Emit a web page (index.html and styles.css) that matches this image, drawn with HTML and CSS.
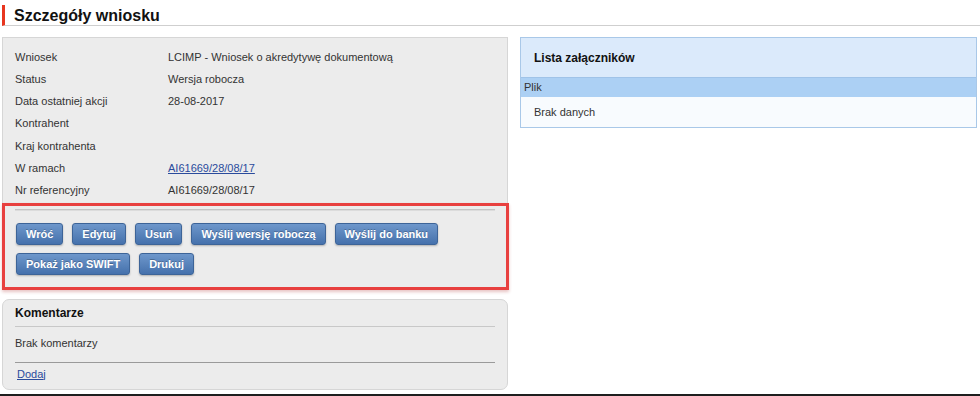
FILE: index.html
```html
<!DOCTYPE html>
<html lang="pl">
<head>
  <meta charset="UTF-8" />
  <title>Szczegóły wniosku</title>
  <link rel="stylesheet" href="styles.css">
</head>
<body>
  <div class="page">
    <h1 class="page-title">Szczegóły wniosku</h1>

    <div class="content">
      <div class="left-col">
        <!-- Details -->
        <div class="details-panel">
          <table class="details">
            <tr><td class="label">Wniosek</td><td>LCIMP - Wniosek o akredytywę dokumentową</td></tr>
            <tr><td class="label">Status</td><td>Wersja robocza</td></tr>
            <tr><td class="label">Data ostatniej akcji</td><td>28-08-2017</td></tr>
            <tr><td class="label">Kontrahent</td><td></td></tr>
            <tr><td class="label">Kraj kontrahenta</td><td></td></tr>
            <tr><td class="label">W ramach</td><td><a href="#">AI61669/28/08/17</a></td></tr>
            <tr><td class="label">Nr referencyjny</td><td>AI61669/28/08/17</td></tr>
          </table>

          <div class="actions">
            <button class="btn">Wróć</button>
            <button class="btn">Edytuj</button>
            <button class="btn">Usuń</button>
            <button class="btn">Wyślij wersję roboczą</button>
            <button class="btn">Wyślij do banku</button>
            <button class="btn">Pokaż jako SWIFT</button>
            <button class="btn">Drukuj</button>
            <div class="highlight"></div>
          </div>
        </div>

        <!-- Comments -->
        <div class="comments">
          <div class="comments-head">Komentarze</div>
          <div class="comments-body">Brak komentarzy</div>
          <div class="comments-foot"><a href="#">Dodaj</a></div>
        </div>
      </div>

      <!-- Attachments -->
      <div class="attachments">
        <div class="att-head">Lista załączników</div>
        <div class="att-cols">Plik</div>
        <div class="att-empty">Brak danych</div>
      </div>
    </div>

    <div class="bottom-line"></div>
  </div>
</body>
</html>
```

FILE: styles.css
```css
html, body {
  margin: 0;
  padding: 0;
  background: #fff;
  overflow: hidden;
}

body {
  font-family: 'Liberation Sans', Arial, sans-serif;
  font-size: 11px;
  color: #333;
}

.page {
  height: 396px;
  display: flex;
  flex-direction: column;
}

.page-title {
  margin: 5px 0 0 2px;
  height: 20px;
  line-height: 21px;
  padding-left: 9px;
  border-left: 3px solid #e8361f;
  border-bottom: 1px solid #cfcfcf;
  font-size: 16px;
  font-weight: bold;
  color: #111;
}

.content {
  display: flex;
  gap: 12px;
  margin: 11px 0 0 2px;
  align-items: flex-start;
}

.left-col {
  width: 506px;
  display: flex;
  flex-direction: column;
  gap: 10px;
}

/* Details panel */
.details-panel {
  background: #ececec;
  border: 1px solid #d6d6d6;
  padding: 8px 12px 13px;
}

.details {
  border-collapse: collapse;
}

.details td {
  height: 22px;
  padding: 0;
  vertical-align: middle;
}

.details tr:nth-child(n+4) td {
  height: 22.4px;
}

.details .label {
  width: 153px;
}

a {
  color: #2a4b9c;
}

.actions {
  position: relative;
  display: flex;
  flex-wrap: wrap;
  gap: 8px 9px;
  margin-top: 7px;
  padding: 13px 0 0 1px;
  border-top: 1px solid #c4c4c4;
  box-shadow: inset 0 1px 0 #dcdcdc;
}

.btn {
  height: 22px;
  padding: 0 9px;
  font-family: 'Liberation Sans', Arial, sans-serif;
  font-size: 11px;
  font-weight: bold;
  color: #fff;
  text-shadow: 0 -1px 0 rgba(0,0,0,0.25);
  background: linear-gradient(#6e97cb, #4571ac);
  border: 1px solid #3d6498;
  border-radius: 3px;
  box-shadow: 0 1px 2px rgba(0,0,0,0.25);
  cursor: pointer;
}

.highlight {
  position: absolute;
  left: -13px;
  right: -14px;
  top: -7px;
  bottom: -15px;
  border: 3px solid #e8403f;
  box-shadow: 0 2px 3px rgba(180,60,60,0.3);
  pointer-events: none;
}

/* Comments */
.comments {
  background: #ececec;
  border: 1px solid #d6d6d6;
  border-radius: 7px;
  padding: 0 12px;
}

.comments-head {
  height: 26px;
  line-height: 26px;
  font-size: 12px;
  font-weight: bold;
  color: #111;
  border-bottom: 1px solid #c8c8c8;
}

.comments-body {
  height: 35px;
  line-height: 33px;
  border-bottom: 1px solid #9a9a9a;
}

.comments-foot {
  height: 26px;
  line-height: 22px;
  padding-left: 2px;
}

/* Attachments */
.attachments {
  width: 455px;
  border: 1px solid #a9c8e8;
}

.att-head {
  height: 39px;
  line-height: 40px;
  padding-left: 13px;
  background: #dbeafb;
  font-size: 12px;
  font-weight: bold;
  color: #111;
}

.att-cols {
  height: 19px;
  line-height: 19px;
  padding-left: 3px;
  background: #acd0f4;
  border-top: 1px solid #a0c3e8;
}

.att-empty {
  height: 30px;
  line-height: 30px;
  padding-left: 13px;
  background: #f8fbfe;
}

.bottom-line {
  margin-top: auto;
  height: 2px;
  background: #1e1e1e;
}
```
